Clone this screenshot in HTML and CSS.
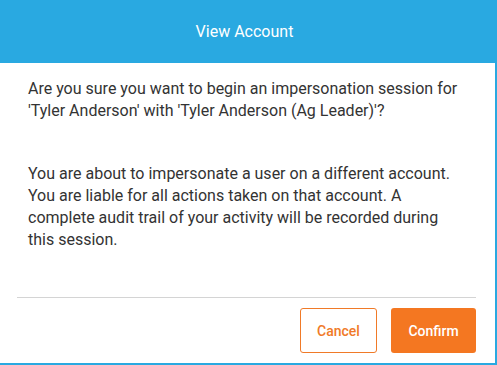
FILE: index.html
```html
<!DOCTYPE html>
<html>
<head>
<meta charset="utf-8">
<link rel="stylesheet" href="styles.css">
</head>
<body>
<div class="dialog">
  <div class="header">View Account</div>
  <div class="content">
    <p class="para">Are you sure you want to begin an impersonation session for 'Tyler Anderson' with 'Tyler Anderson (Ag Leader)'?</p>
    <p class="para warn">You are about to impersonate a user on a different account. You are liable for all actions taken on that account. A complete audit trail of your activity will be recorded during this session.</p>
  </div>
  <div class="footer">
    <button class="btn cancel">Cancel</button>
    <button class="btn confirm">Confirm</button>
  </div>
</div>
</body>
</html>
```
FILE: styles.css
```css
html, body {
  margin: 0;
  padding: 0;
  background: #ffffff;
}
body {
  font-family: Roboto, "Liberation Sans", sans-serif;
  width: 497px;
  height: 365px;
  overflow: hidden;
}
.dialog {
  width: 497px;
  height: 365px;
  box-sizing: border-box;
  border-right: 2px solid #29a9e1;
  border-bottom: 2px solid #29a9e1;
  display: flex;
  flex-direction: column;
}
.header {
  height: 63px;
  margin-right: -2px;
  background: #29a9e1;
  color: #ffffff;
  font-size: 16px;
  display: flex;
  align-items: center;
  justify-content: center;
  padding-right: 8px;
}
.content {
  padding: 15px 28px 0 28px;
  height: 234px;
  box-sizing: border-box;
}
.para {
  margin: 0;
  font-size: 16px;
  line-height: 22px;
  color: #333333;
}
.warn {
  margin-top: 41px;
}
.footer {
  margin-left: 17px;
  width: 459px;
  border-top: 1px solid #d4d4d4;
  padding-top: 10px;
  display: flex;
  justify-content: flex-end;
  gap: 14px;
}
.btn {
  height: 45px;
  border-radius: 3px;
  font-family: Roboto, "Liberation Sans", sans-serif;
  font-size: 14px;
  font-weight: 500;
  cursor: pointer;
  box-sizing: border-box;
}
.cancel {
  width: 77px;
  background: #ffffff;
  color: #f07a28;
  border: 1px solid #f07a28;
}
.confirm {
  width: 85px;
  background: #f47721;
  color: #ffffff;
  border: none;
}
```
